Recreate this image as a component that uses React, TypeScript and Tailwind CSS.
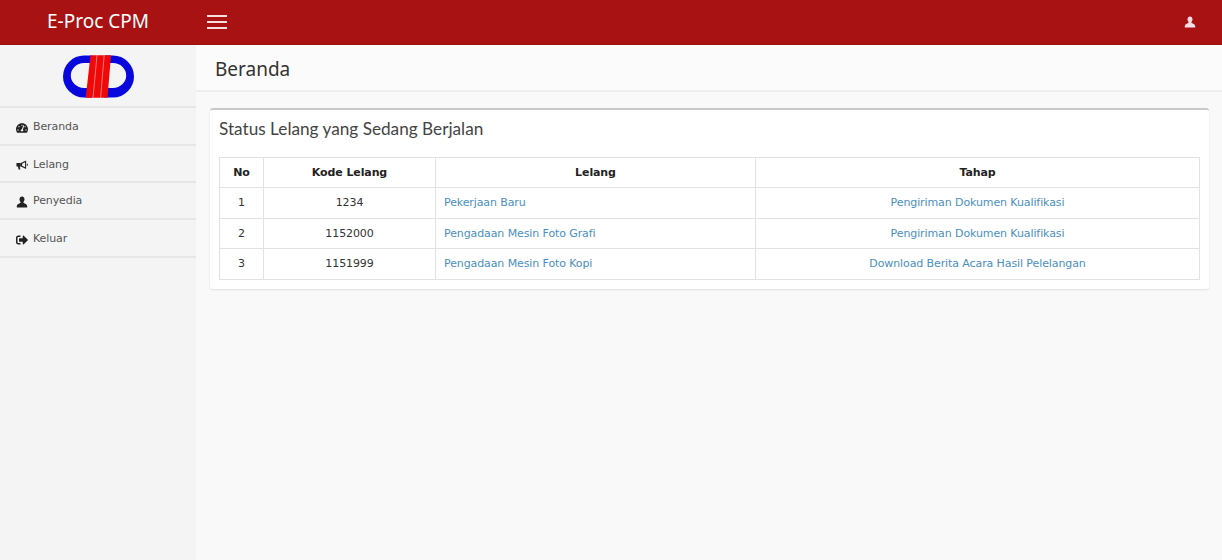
import { FaTachometerAlt, FaSignOutAlt } from "react-icons/fa";

function UserGlyph({ className }: { className?: string }) {
  return (
    <svg viewBox="0 0 12 12" className={className} fill="currentColor" aria-hidden="true">
      <path d="M6 0.5C4.5 0.5 3.5 1.7 3.5 3.2C3.5 4.4 4 5.4 4.6 6C4.7 6.6 4.4 7 3.8 7.3C2.4 7.9 1 8.4 0.8 10V11.5H11.2V10C11 8.4 9.6 7.9 8.2 7.3C7.6 7 7.3 6.6 7.4 6C8 5.4 8.5 4.4 8.5 3.2C8.5 1.7 7.5 0.5 6 0.5Z" />
    </svg>
  );
}

function HornGlyph({ className }: { className?: string }) {
  return (
    <svg viewBox="0 0 13 12" className={className} aria-hidden="true">
      <path d="M0.5 3.8H5.2V7.6H4.1L4.7 10.8H2.8L2.1 7.6H0.5Z" fill="currentColor" />
      <path d="M5.2 3.8L11 1V10.4L5.2 7.6Z" fill="currentColor" />
      <path d="M6.6 4.7L9.8 3V8.4L6.6 6.7Z" fill="#f4f4f4" />
      <path d="M11.8 4.6H12.8V6.8H11.8Z" fill="currentColor" />
    </svg>
  );
}

const menu = [
  { label: "Beranda", Icon: FaTachometerAlt, row: "h-[38px] pt-[3px]" },
  { label: "Lelang", Icon: HornGlyph, row: "h-[37px] pt-[3px]" },
  { label: "Penyedia", Icon: UserGlyph, row: "h-[37px] pt-[2px]" },
  { label: "Keluar", Icon: FaSignOutAlt, row: "h-[38px] pt-[3px]" },
];

const rows = [
  { no: "1", kode: "1234", lelang: "Pekerjaan Baru", tahap: "Pengiriman Dokumen Kualifikasi" },
  { no: "2", kode: "1152000", lelang: "Pengadaan Mesin Foto Grafi", tahap: "Pengiriman Dokumen Kualifikasi" },
  { no: "3", kode: "1151999", lelang: "Pengadaan Mesin Foto Kopi", tahap: "Download Berita Acara Hasil Pelelangan" },
];

function Logo() {
  return (
    <svg width="76" height="50" viewBox="60 50.5 76 50" aria-hidden="true">
      <path
        d="M92 55H84A21 21 0 0 0 84 97H92V87.5H84A13.2 12.5 0 0 1 84 62.5H92Z"
        fill="#0808dc"
      />
      <path
        d="M104 55H113A21 21 0 0 1 113 97H104V87.5H113A13.2 12.5 0 0 0 113 62.5H104Z"
        fill="#0808dc"
      />
      <polygon points="90.5,54.7 111,54.7 107.5,97.3 85.7,97.3" fill="#ee0808" />
      <path d="M97 54.7L93 97.3M104.2 54.7L100.6 97.3" stroke="#f8a8a8" strokeWidth="0.7" />
    </svg>
  );
}

export default function App() {
  const cell = "border border-[#e2e2e2] px-2 pt-[1px] text-center";
  return (
    <div className="flex h-[560px] w-full flex-col overflow-hidden bg-[#f9f9f9] font-['DejaVu_Sans',sans-serif] text-[11px] tracking-[-0.1px] text-[#333]">
      <header className="flex h-[45px] shrink-0 items-center border-b border-[#9c1011] bg-[#a91213] tracking-normal text-white">
        <div className="w-[196px] pb-[1px] text-center font-['Noto_Sans',sans-serif] text-[19px]">E-Proc CPM</div>
        <div className="ml-[11px] flex w-5 flex-col gap-[4px]">
          <span className="h-[2px] bg-[#f6dede]" />
          <span className="h-[2px] bg-[#f6dede]" />
          <span className="h-[2px] bg-[#f6dede]" />
        </div>
        <UserGlyph className="ml-auto mr-[26px] h-3 w-3 text-[#f8dfe6]" />
      </header>
      <div className="flex min-h-0 flex-1">
        <aside className="w-[196px] shrink-0 bg-[#f4f4f4]">
          <div className="flex h-[63px] items-center justify-center border-b-2 border-[#e6e6e6]">
            <Logo />
          </div>
          {menu.map(({ label, Icon, row }) => (
            <div key={label} className={`flex items-center gap-[5px] border-b-2 border-[#e6e6e6] pl-4 text-[#555] ${row}`}>
              <Icon className="h-3 w-3 shrink-0 text-[#222]" />
              <span>{label}</span>
            </div>
          ))}
        </aside>
        <main className="min-w-0 flex-1 bg-[#f9f9f9]">
          <div className="flex h-[47px] items-center border-b-2 border-[#eeeeee] bg-[#fbfbfb] pl-[19px] pt-[4px] font-['Noto_Sans',sans-serif] text-[19px] tracking-normal text-[#333]">
            Beranda
          </div>
          <section className="ml-[14px] mr-[13px] mt-4 h-[181px] rounded-[3px] border-t-2 border-[#c9c9c9] bg-white px-[9px] shadow-[0_1px_2px_rgba(0,0,0,0.1)]">
            <h3 className="pt-[7px] font-['Lato',sans-serif] text-[17.2px] leading-[24px] tracking-normal text-[#444]">Status Lelang yang Sedang Berjalan</h3>
            <table className="mt-[16px] w-[981px] table-fixed border-collapse border border-[#dcdcdc]">
              <colgroup>
                <col className="w-[44px]" />
                <col className="w-[172px]" />
                <col className="w-[320px]" />
                <col />
              </colgroup>
              <thead>
                <tr className="h-[30px] font-bold text-[#222]">
                  <th className={cell}>No</th>
                  <th className={cell}>Kode Lelang</th>
                  <th className={cell}>Lelang</th>
                  <th className={cell}>Tahap</th>
                </tr>
              </thead>
              <tbody>
                {rows.map((r) => (
                  <tr key={r.no} className="h-[30.5px]">
                    <td className={cell}>{r.no}</td>
                    <td className={cell}>{r.kode}</td>
                    <td className={`${cell} text-left text-[#4a8fc0]`}>{r.lelang}</td>
                    <td className={`${cell} text-[#4a8fc0]`}>{r.tahap}</td>
                  </tr>
                ))}
              </tbody>
            </table>
          </section>
        </main>
      </div>
    </div>
  );
}
